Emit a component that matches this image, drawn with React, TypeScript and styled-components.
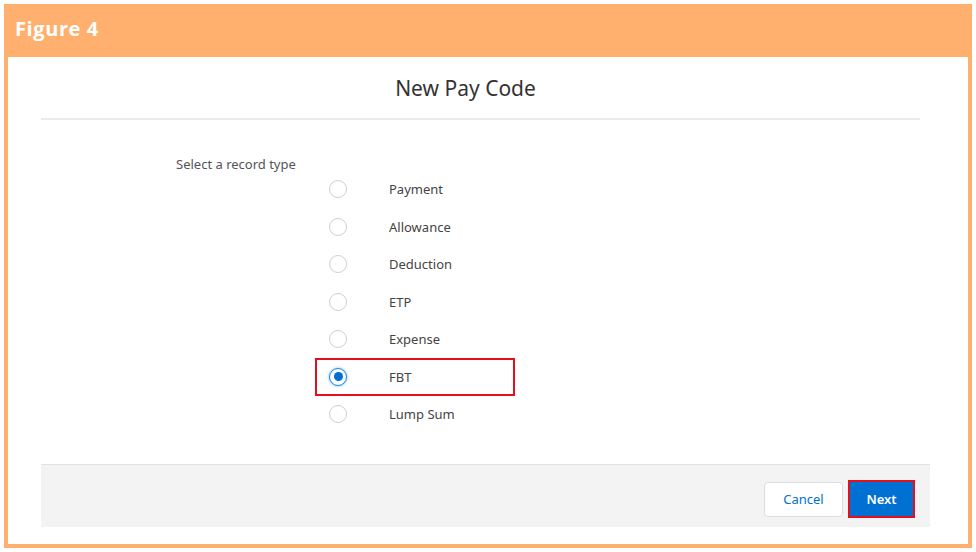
import React, { useState } from 'react';
import styled, { createGlobalStyle } from 'styled-components';

const GlobalStyle = createGlobalStyle`
  html, body {
    margin: 0;
    padding: 0;
    background: #ffffff;
  }
  * {
    box-sizing: border-box;
  }
`;

const Page = styled.div`
  width: 976px;
  height: 552px;
  padding: 4px;
  background: #ffffff;
`;

const Frame = styled.div`
  width: 968px;
  height: 544px;
  display: flex;
  flex-direction: column;
  border: 4px solid #ffb06e;
  border-top: none;
  background: #ffffff;
`;

const FigureHeader = styled.div`
  height: 53px;
  margin: 0 -4px;
  padding: 0 11px 4px;
  display: flex;
  align-items: center;
  background: #ffb06e;
  color: #ffffff;
  font-family: 'Open Sans', 'Noto Sans', sans-serif;
  font-weight: 700;
  font-size: 20px;
  letter-spacing: 0.6px;
`;

const Modal = styled.div`
  flex: 1;
  display: flex;
  flex-direction: column;
  margin: 0 38px 17px 33px;
  font-family: 'Noto Sans', 'Open Sans', sans-serif;
  color: #3e3e3c;
`;

const TitleBar = styled.div`
  height: 63px;
  margin-right: 10px;
  padding-right: 30px;
  display: flex;
  align-items: center;
  justify-content: center;
  border-bottom: 2px solid #ebebeb;
  font-size: 21px;
  font-weight: 400;
  color: #333333;
`;

const Body = styled.div`
  flex: 1;
  padding-top: 36px;
`;

const FieldLabel = styled.div`
  margin-left: 135px;
  margin-bottom: -1.5px;
  font-size: 13px;
  line-height: 16px;
  color: #54545a;
`;

const OptionList = styled.div`
  margin-left: 274px;
  display: flex;
  flex-direction: column;
`;

const OptionRow = styled.label<{ $highlight?: boolean }>`
  width: 200px;
  height: 37.5px;
  display: flex;
  align-items: center;
  border: 2px solid ${({ $highlight }) => ($highlight ? '#e3101b' : 'transparent')};
  padding-left: 12px;
  cursor: pointer;
`;

const Radio = styled.span<{ $checked?: boolean }>`
  width: 18px;
  height: 18px;
  border-radius: 50%;
  border: 1px solid ${({ $checked }) => ($checked ? '#1589ee' : '#d0d0d0')};
  background: #ffffff;
  display: flex;
  align-items: center;
  justify-content: center;
  box-shadow: ${({ $checked }) => ($checked ? '0 0 3px rgba(21, 137, 238, 0.6)' : 'none')};

  &::after {
    content: '';
    width: 9px;
    height: 9px;
    border-radius: 50%;
    background: ${({ $checked }) => ($checked ? '#0070d2' : 'transparent')};
  }
`;

const OptionText = styled.span`
  margin-left: 42px;
  font-size: 13px;
  color: #444444;
`;

const Footer = styled.div`
  height: 63px;
  display: flex;
  align-items: center;
  justify-content: flex-end;
  gap: 5px;
  padding: 6px 15px 0 0;
  background: #f3f3f3;
  border-top: 1px solid #e2e2e2;
`;

const Button = styled.button<{ $primary?: boolean }>`
  height: ${({ $primary }) => ($primary ? '38px' : '35px')};
  width: ${({ $primary }) => ($primary ? '67px' : '79px')};
  border: ${({ $primary }) => ($primary ? '2px solid #e3101b' : '1px solid #d8dde6')};
  border-radius: ${({ $primary }) => ($primary ? '0' : '4px')};
  background: ${({ $primary }) => ($primary ? '#0070d2' : '#ffffff')};
  color: ${({ $primary }) => ($primary ? '#ffffff' : '#0070d2')};
  font-family: 'Noto Sans', 'Open Sans', sans-serif;
  font-size: 13px;
  font-weight: ${({ $primary }) => ($primary ? 600 : 400)};
  cursor: pointer;
`;

const recordTypes = ['Payment', 'Allowance', 'Deduction', 'ETP', 'Expense', 'FBT', 'Lump Sum'];

export default function App() {
  const [selected, setSelected] = useState('FBT');

  return (
    <Page>
      <GlobalStyle />
      <Frame>
        <FigureHeader>Figure 4</FigureHeader>
        <Modal>
          <TitleBar>New Pay Code</TitleBar>
          <Body>
            <FieldLabel>Select a record type</FieldLabel>
            <OptionList>
              {recordTypes.map((type) => (
                <OptionRow
                  key={type}
                  $highlight={type === 'FBT'}
                  onClick={() => setSelected(type)}
                >
                  <Radio $checked={selected === type} />
                  <OptionText>{type}</OptionText>
                </OptionRow>
              ))}
            </OptionList>
          </Body>
          <Footer>
            <Button>Cancel</Button>
            <Button $primary>Next</Button>
          </Footer>
        </Modal>
      </Frame>
    </Page>
  );
}
